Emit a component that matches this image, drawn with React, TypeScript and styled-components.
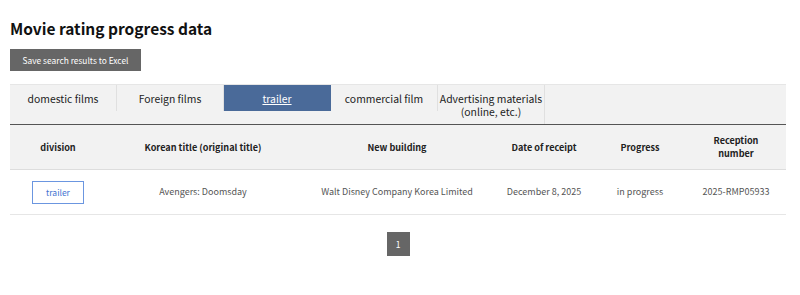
import React from "react";
import styled, { createGlobalStyle } from "styled-components";

const GlobalStyle = createGlobalStyle`
  html, body {
    margin: 0;
    padding: 0;
    background: #fff;
  }
  body {
    font-family: "Noto Sans CJK KR", "Noto Sans", sans-serif;
    color: #333;
  }
`;

const Page = styled.div`
  padding: 14px 14px 0 10px;
  width: 800px;
  box-sizing: border-box;
`;

const Title = styled.h1`
  margin: 0;
  font-size: 15.5px;
  line-height: 28px;
  font-weight: 700;
  color: #111;
`;

const ExcelButton = styled.button`
  display: block;
  margin-top: 7px;
  width: 131px;
  height: 22px;
  padding: 0;
  border: 0;
  background: #666;
  color: #fff;
  font-family: inherit;
  font-size: 8.4px;
  line-height: 22px;
  text-align: center;
  cursor: pointer;
`;

const Tabs = styled.ul`
  display: flex;
  align-items: flex-start;
  margin: 13px 0 0;
  padding: 0;
  list-style: none;
  background: #f2f2f2;
  border-top: 1px solid #e6e6e6;
  border-bottom: 1px solid #555;
`;

const Tab = styled.li<{ $active?: boolean }>`
  width: 106px;
  padding: 7px 0 6px;
  text-align: center;
  font-size: 10.4px;
  line-height: 13px;
  color: ${(p) => (p.$active ? "#fff" : "#222")};
  background: ${(p) => (p.$active ? "#4a6a99" : "transparent")};
  text-decoration: ${(p) => (p.$active ? "underline" : "none")};
  border-right: 1px solid ${(p) => (p.$active ? "#4a6a99" : "#e0e0e0")};
  &:last-child {
    align-self: stretch;
  }
`;

const Table = styled.table`
  width: 776px;
  border-collapse: collapse;
  table-layout: fixed;
  font-size: 9px;
`;

const HeadCell = styled.th`
  height: 44px;
  padding: 0 10px;
  background: #f2f2f2;
  border-bottom: 1px solid #ddd;
  font-size: 9.1px;
  font-weight: 700;
  color: #222;
  line-height: 13px;
  text-align: center;
`;

const Cell = styled.td`
  height: 42px;
  border-bottom: 1px solid #e6e6e6;
  color: #555;
  text-align: center;
  line-height: 14px;
`;

const Badge = styled.span`
  display: inline-block;
  width: 50px;
  height: 21px;
  line-height: 21px;
  border: 1px solid #6b96e0;
  color: #3f73d1;
  font-size: 8.5px;
`;

const Pager = styled.div`
  display: flex;
  justify-content: center;
  margin-top: 17px;
`;

const PageNum = styled.span`
  width: 23px;
  height: 24px;
  line-height: 24px;
  background: #666;
  color: #fff;
  font-size: 8.5px;
  text-align: center;
`;

const tabs = [
  "domestic films",
  "Foreign films",
  "trailer",
  "commercial film",
  "Advertising materials (online, etc.)",
];

const cols = [96, 194, 194, 100, 92, 100];

const App: React.FC = () => {
  return (
    <Page>
      <GlobalStyle />
      <Title>Movie rating progress data</Title>
      <ExcelButton>Save search results to Excel</ExcelButton>
      <Tabs>
        {tabs.map((t) => (
          <Tab key={t} $active={t === "trailer"}>
            {t}
          </Tab>
        ))}
      </Tabs>
      <Table>
        <colgroup>
          {cols.map((w, i) => (
            <col key={i} style={{ width: w }} />
          ))}
        </colgroup>
        <thead>
          <tr>
            <HeadCell>division</HeadCell>
            <HeadCell>Korean title (original title)</HeadCell>
            <HeadCell>New building</HeadCell>
            <HeadCell>Date of receipt</HeadCell>
            <HeadCell>Progress</HeadCell>
            <HeadCell>Reception number</HeadCell>
          </tr>
        </thead>
        <tbody>
          <tr>
            <Cell>
              <Badge>trailer</Badge>
            </Cell>
            <Cell>Avengers: Doomsday</Cell>
            <Cell>Walt Disney Company Korea Limited</Cell>
            <Cell>December 8, 2025</Cell>
            <Cell>in progress</Cell>
            <Cell>2025-RMP05933</Cell>
          </tr>
        </tbody>
      </Table>
      <Pager>
        <PageNum>1</PageNum>
      </Pager>
    </Page>
  );
};

export default App;
